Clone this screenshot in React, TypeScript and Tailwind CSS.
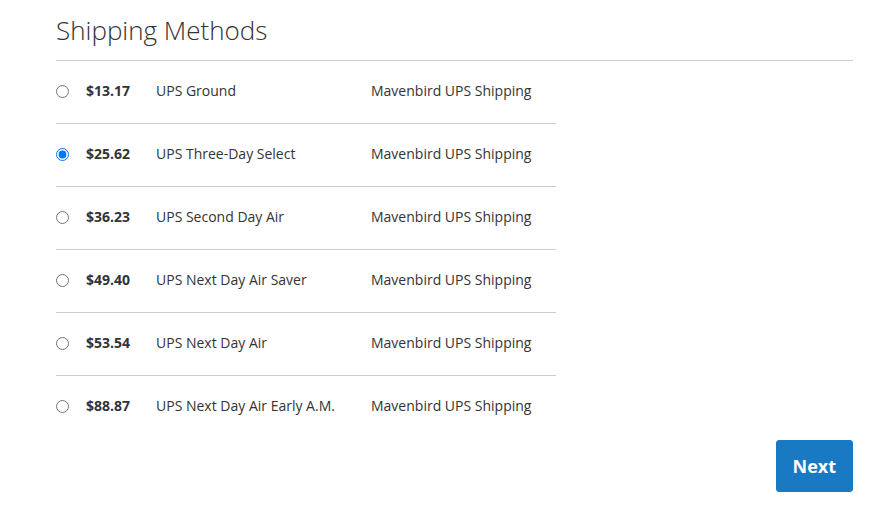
const rates = [
  { price: "$13.17", method: "UPS Ground" },
  { price: "$25.62", method: "UPS Three-Day Select" },
  { price: "$36.23", method: "UPS Second Day Air" },
  { price: "$49.40", method: "UPS Next Day Air Saver" },
  { price: "$53.54", method: "UPS Next Day Air" },
  { price: "$88.87", method: "UPS Next Day Air Early A.M." },
];

const App = () => {
  return (
    <div className="min-h-[511px] bg-white pl-[56px] pr-[34px] text-[#333] font-['Open_Sans',sans-serif]">
      <div className="pt-[16px] pb-[16px] border-b border-[#ccc] text-[26px] leading-[28px] font-light">
        Shipping Methods
      </div>

      <div className="w-[500px] text-[14px] leading-[20px]">
        {rates.map((rate, i) => (
          <label
            key={rate.price}
            className={`flex items-center h-[63px] pb-[2px] border-b cursor-pointer ${
              i < rates.length - 1 ? "border-[#ccc]" : "border-transparent"
            }`}
          >
            <div className="w-[30px] flex items-center">
              <input
                type="radio"
                name="shipping"
                defaultChecked={i === 1}
                className="m-0 w-[13px] h-[13px]"
              />
            </div>
            <div className="w-[70px] font-bold">{rate.price}</div>
            <div className="w-[215px]">{rate.method}</div>
            <div>Mavenbird UPS Shipping</div>
          </label>
        ))}
      </div>

      <div className="flex justify-end mt-[1px]">
        <button className="h-[52px] px-[16px] rounded-[3px] border border-[#1979c3] bg-[#1979c3] text-white text-[18px] leading-[22px] font-bold">
          Next
        </button>
      </div>
    </div>
  );
};

export default App;
